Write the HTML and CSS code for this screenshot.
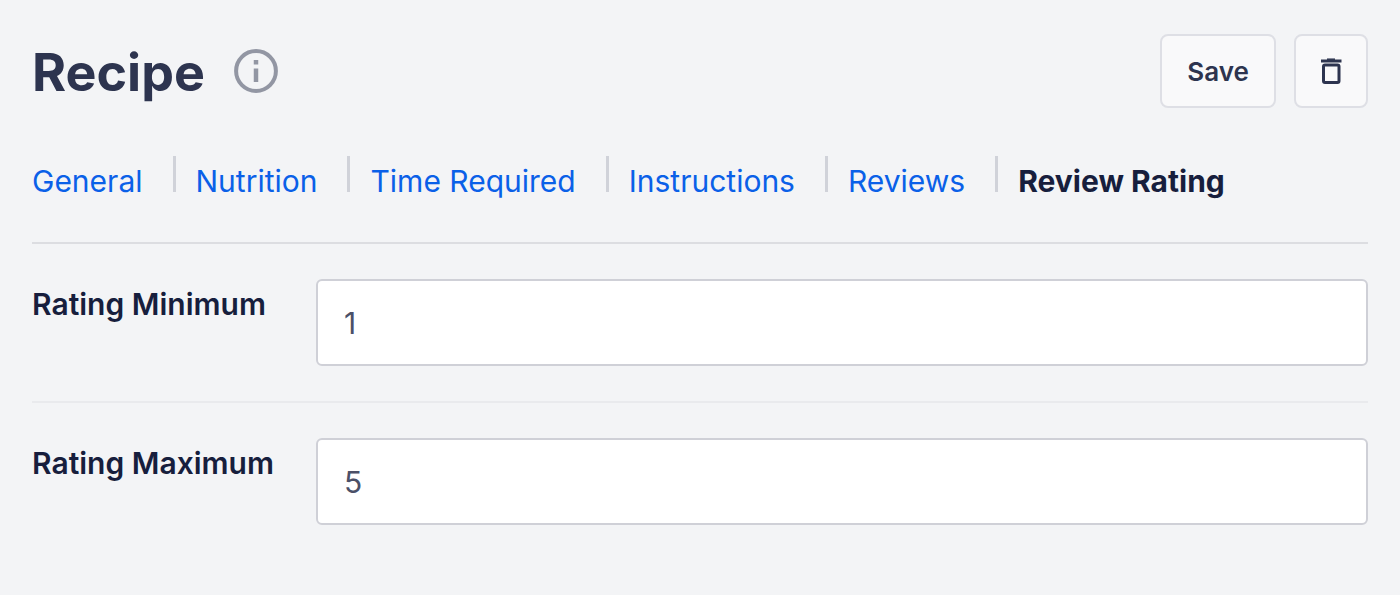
FILE: index.html
```html
<!DOCTYPE html>
<html lang="en">
<head>
<meta charset="utf-8">
<meta name="viewport" content="width=device-width, initial-scale=1">
<title>Recipe</title>
<link rel="stylesheet" href="styles.css">
</head>
<body>
<main class="panel">
  <header class="header">
    <h1 class="title">Recipe</h1>
    <button class="info" type="button" aria-label="Information">
      <svg viewBox="0 0 44 44" width="44" height="44" fill="none" stroke="currentColor" stroke-width="4">
        <circle cx="22" cy="22" r="19.900"/>
        <path d="M22 11v4.500M22 19.500v13.500" stroke-width="4.500"/>
      </svg>
    </button>
    <div class="actions">
      <button class="button save" type="button">Save</button>
      <button class="button delete" type="button" aria-label="Delete">
        <svg viewBox="0 0 22 28" width="22" height="28" fill="none" stroke="currentColor" stroke-width="3">
          <path d="M1 4h20.500"/>
          <path d="M7 2.200h8" stroke-width="1.500"/>
          <rect x="3.500" y="8" width="15.500" height="17.500" rx="1.500"/>
        </svg>
      </button>
    </div>
  </header>
  <nav class="tabs">
    <a class="tab" href="#general">General</a>
    <a class="tab" href="#nutrition">Nutrition</a>
    <a class="tab" href="#time">Time Required</a>
    <a class="tab" href="#instructions">Instructions</a>
    <a class="tab" href="#reviews">Reviews</a>
    <a class="tab current" href="#rating" aria-current="page">Review Rating</a>
  </nav>
  <form class="fields">
    <div class="field">
      <label class="label" for="minimum">Rating Minimum</label>
      <input class="input" id="minimum" type="text" value="1">
    </div>
    <div class="field">
      <label class="label" for="maximum">Rating Maximum</label>
      <input class="input" id="maximum" type="text" value="5">
    </div>
  </form>
</main>
</body>
</html>
```
FILE: styles.css
```css
* { box-sizing: border-box; }
body {
  margin: 0;
  background: #f3f4f6;
  color: #171e3d;
  font-family: Inter, "Liberation Sans", sans-serif;
}
.panel { padding: 34px 32px; }
.header { display: flex; align-items: center; }
.title {
  margin: 0;
  padding-top: 4px;
  color: #2d344f;
  font-size: 52px;
  line-height: 70px;
  font-weight: 700;
}
.info {
  display: flex;
  margin-left: 29px;
  padding: 0;
  border: 0;
  background: none;
  color: #9296a3;
}
.actions { display: flex; gap: 18px; margin-left: auto; }
.button {
  display: flex;
  align-items: center;
  justify-content: center;
  height: 74px;
  border: 2px solid #dedfe5;
  border-radius: 8px;
  background: #f9f9fa;
  color: #2d344f;
  font: 600 26px Inter, "Liberation Sans", sans-serif;
}
.save { width: 116px; }
.delete { width: 74px; }
.tabs {
  display: flex;
  margin-top: 48px;
  padding-bottom: 36px;
  border-bottom: 2px solid #dcdde1;
}
.tab {
  display: flex;
  color: #0a60e8;
  font-size: 30px;
  line-height: 50px;
  text-decoration: none;
  white-space: nowrap;
}
.tab + .tab::before {
  content: "";
  width: 3px;
  height: 36px;
  margin: 0 20px 0 30px;
  background: #d0d2d9;
}
.current { color: #171e3d; font-weight: 700; }
.field {
  display: grid;
  grid-template-columns: 284px 1fr;
  padding: 35px 0;
}
.field + .field { border-top: 2px solid #e9eaed; }
.label { font-size: 30px; line-height: 50px; font-weight: 600; white-space: nowrap; }
.input {
  width: 100%;
  height: 87px;
  padding: 0 26px;
  border: 2px solid #cfd0d7;
  border-radius: 6px;
  background: #fff;
  color: #4b5068;
  font: 400 30px Inter, "Liberation Sans", sans-serif;
}
```
